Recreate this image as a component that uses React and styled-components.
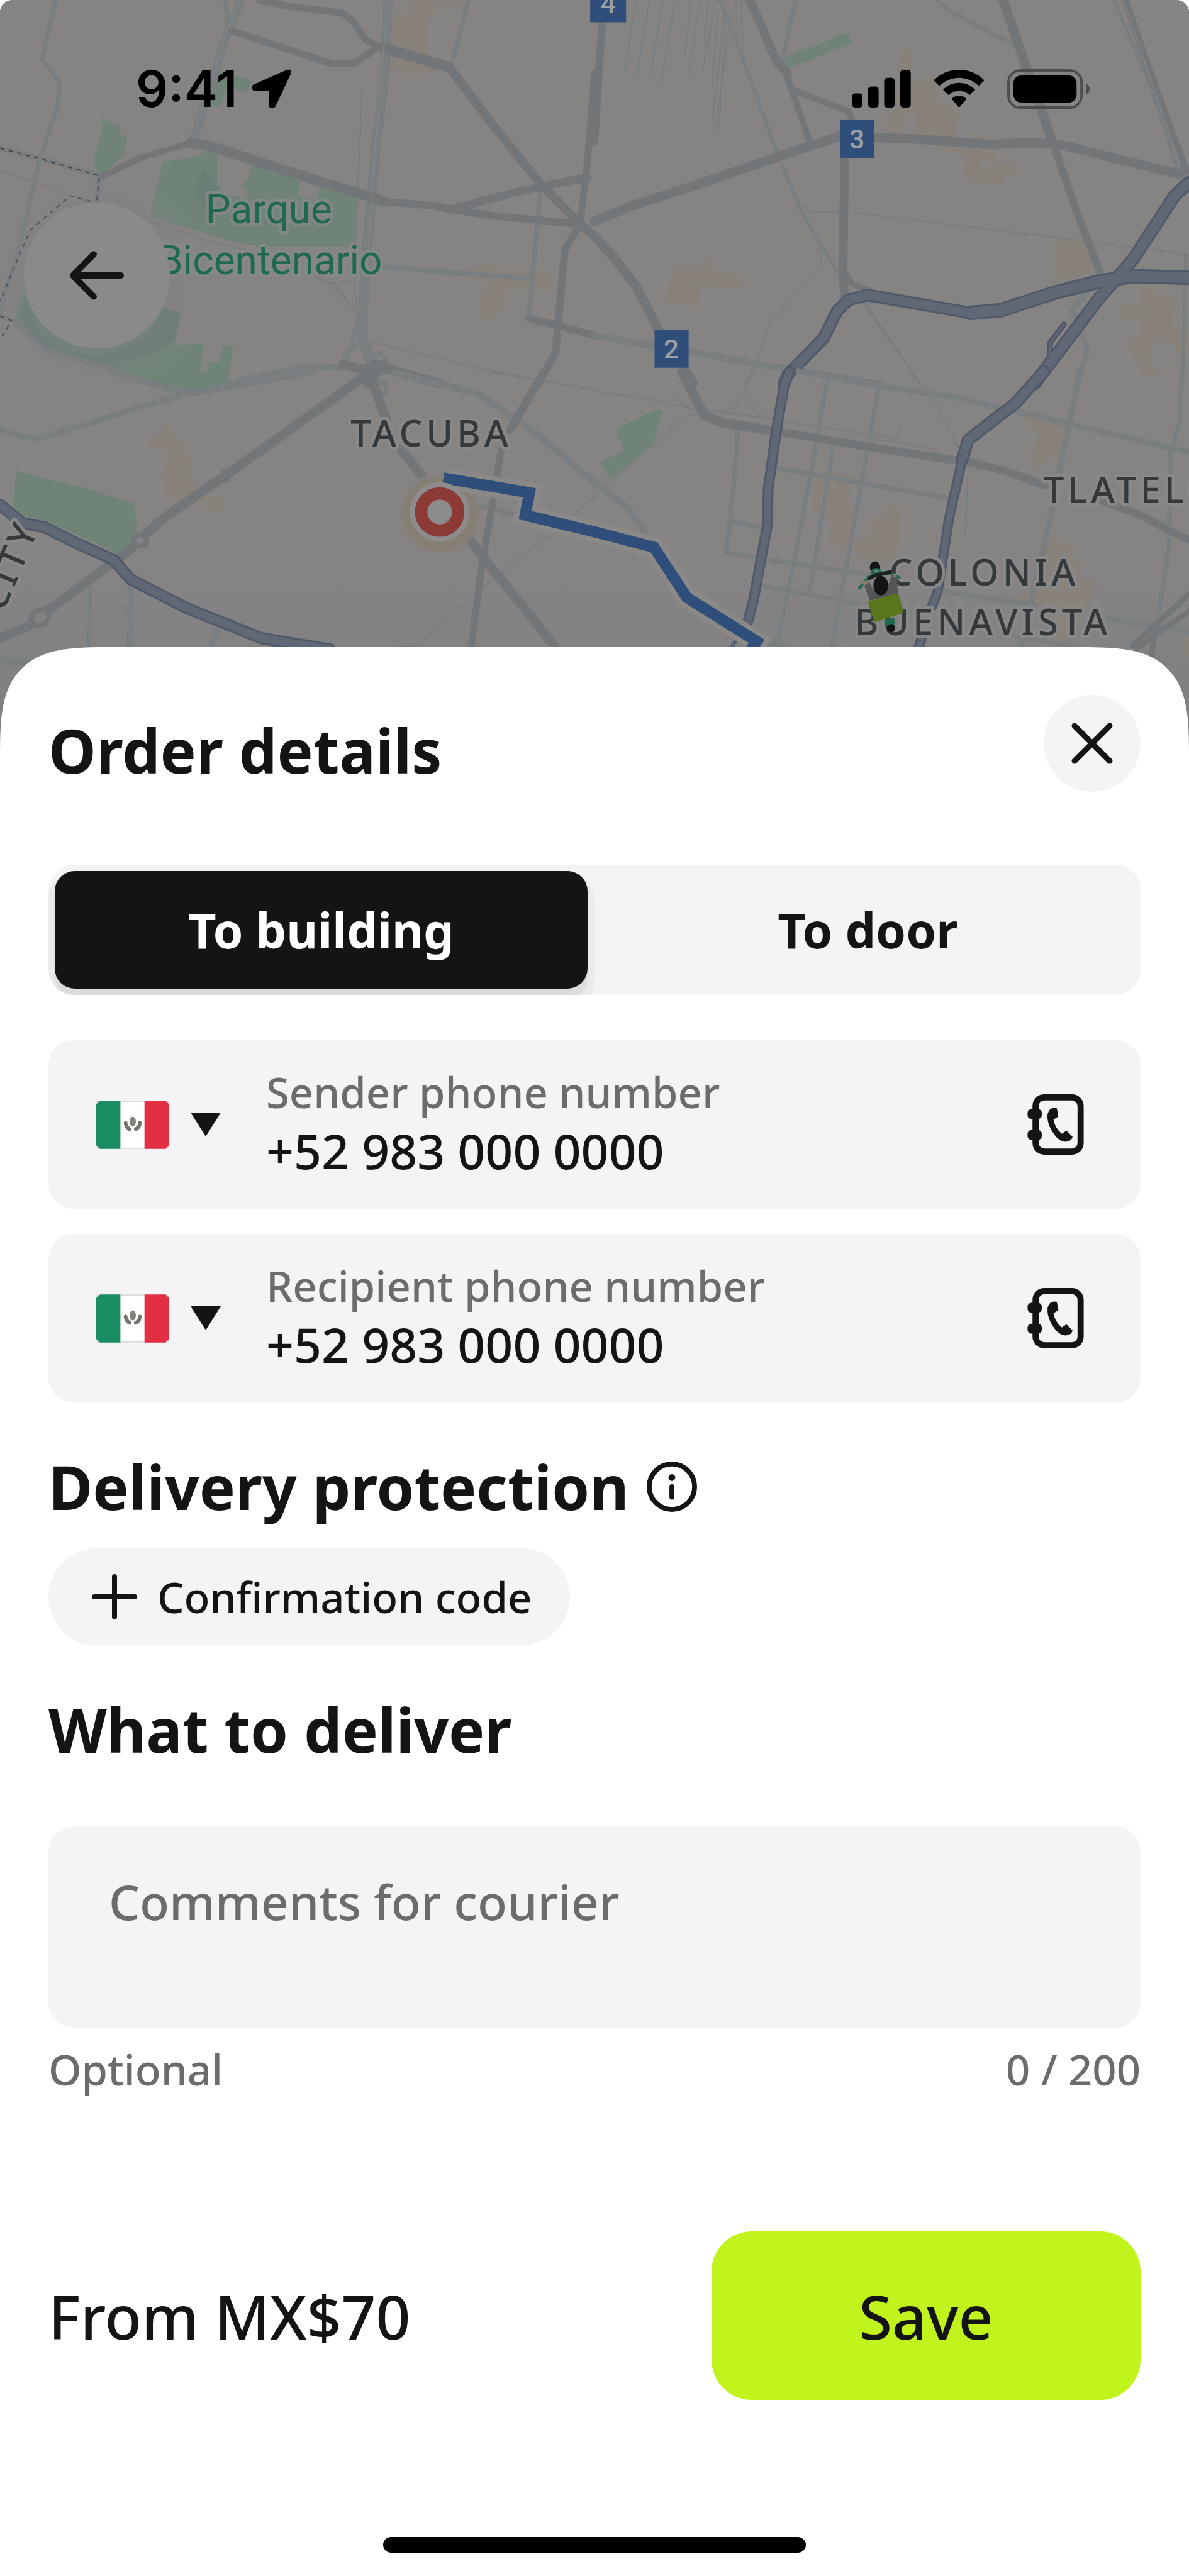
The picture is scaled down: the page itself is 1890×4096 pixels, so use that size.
import React, { useState } from "react";
import styled, { createGlobalStyle } from "styled-components";

const GlobalStyle = createGlobalStyle`
  * { box-sizing: border-box; }
  body { margin: 0; background: #fff; }
  button, input, textarea, select { font: inherit; color: inherit; }
  button { border: 0; padding: 0; background: none; cursor: pointer; }
`;

const ink = "#141414";
const muted = "#6b6c6e";
const surface = "#f4f4f7";

const Screen = styled.div`
  position: relative;
  overflow: hidden;
  border-radius: 20px 20px 0 0;
  background: #848383;
  color: ${ink};
  font-family: "Noto Sans", sans-serif;
`;

const MapCanvas = styled.svg`
  position: absolute;
  top: 0;
  left: 0;
  width: 100%;
  height: auto;
  display: block;
`;

const Line = styled.path`
  fill: none;
  stroke: ${(p) => p.$color};
  stroke-width: ${(p) => p.$w}px;
  stroke-linejoin: round;
  stroke-linecap: ${(p) => (p.$dash ? "butt" : "round")};
  stroke-dasharray: ${(p) => p.$dash || "none"};
  vector-effect: non-scaling-stroke;
`;

const MapLabel = styled.text`
  font-family: ${(p) => p.$font || '"Noto Sans", sans-serif'};
  font-size: ${(p) => p.$size || 59}px;
  font-weight: ${(p) => p.$weight || 500};
  letter-spacing: ${(p) => p.$tracking || 0}px;
  fill: ${(p) => p.$color || "#36393b"};
  stroke: ${(p) => p.$halo || "#898888"};
  stroke-width: 10px;
  stroke-linejoin: round;
  paint-order: stroke;
`;

const Shield = styled.text`
  font-family: Roboto, sans-serif;
  font-size: 43px;
  font-weight: 500;
  fill: #9c9fa3;
  text-anchor: middle;
`;

/* Each quadrant holds its streets in its own grid of 1568 by 1568 units. */
const quadrants = [
  {
    at: "matrix(.61224 0 0 .39541 0 0)",
    parks: [
      "M265 485 315 510 315 550 335 555 325 640 265 715 245 665 272 515Z",
      "M430 662 530 635 540 605 577 625 572 740 590 790 650 812 655 785 635 765 655 725 665 670 793 735 785 800 835 815 845 752 943 790 938 1010 700 1010 620 990 395 885Z",
      "M588 1410 615 1413 600 1568 545 1568 552 1480 578 1480Z",
      "M575 285 660 325 655 378 600 360 580 435 555 430Z",
      "M60 1190 Q 250 1600 430 1255 L477 1280 460 1410 537 1405 525 1568 430 1568 125 1430 40 1300Z",
    ],
    ponds: ["M540 685 580 780 550 850 530 840 518 790 520 740Z", "M70 1225 C100 1520 380 1520 430 1255 L477 1280 460 1390 C400 1480 250 1500 200 1460 L125 1420 50 1300Z"],
    blocks: [
      "M1072 0H1225L1205 30 1150 15 1145 60 1125 80 1130 120 1125 230 1160 240 1180 280 1130 295 1115 310 1065 310 1055 280 1022 280 1035 50 1090 60 1090 10Z",
      "M1180 1110 1300 1080 1310 1105 1450 1105 1450 1190 1340 1180 1325 1260 1290 1325 1262 1290 1265 1200 1290 1150 1180 1130Z",
    ],
    minor: [
      [7, "M148 0 110 240 158 340 152 430 105 650 50 1010 0 1270"],
      [9, "M0 605 110 650 262 718 255 825"],
      [7, "M1235 0 1190 280"],
      [8, "M595 0 602 110"],
      [8, "M1425 780 1395 1300"],
      [9, "M1015 1090 1285 1125 1400 1138"],
      [8, "M0 1290 35 1310 125 1435 430 1568"],
      [10, "M600 1568 780 1505 900 1500 985 1500"],
      [16, "M1023 0 1015 300 990 620 970 980 958 1250 957 1380 985 1490"],
      [14, "M637 0 600 130 507 590"],
      [9, "M958 1250 930 1400 895 1510"],
      [5, "M935 1430 Q945 1380 960 1450 T1000 1440 Q1030 1460 1010 1530"],
    ],
    major: [
      [11, "M685 0 770 28 900 52 930 85 965 165 1010 195"],
      [17, "M1010 195 1185 275"],
      [14, "M1185 275 1305 520 1425 750 1530 915 1568 965"],
      [11, "M610 125 870 258 935 258 1000 190"],
      [10, "M270 720 370 645 500 585"],
      [16, "M500 585 545 592 700 670 850 745 1020 825"],
      [12, "M1020 825 1140 840 1190 855 1290 880 1520 915"],
      [13, "M1195 853 1350 790 1450 755 1550 725"],
      [11, "M1530 915 1550 650 1568 300"],
      [12, "M1530 915 1490 1020 1465 1440 1420 1568"],
      [12, "M1395 1300 1568 1370"],
      [15, "M985 1490 1160 1568"],
      [15, "M905 1490 960 1510 1010 1490 970 1568"],
    ],
    inner: [[2, "M633 0 596 140 510 560"], [2, "M1020 60 988 620 963 1240"]],
    rails: [
      "M0 695 180 795 240 825",
      "M390 900 560 990 700 1040 870 1160 940 1270",
      "M870 1160 920 1145",
      "M955 360 940 900 935 1150 940 1260",
      "M960 1390 1120 1450 1280 1510 1450 1560",
      "M890 1170 945 1290",
    ],
    borders: ["M0 605 110 650 262 718 255 825", "M240 822 185 800 80 940 60 1010 0 1230", "M0 1290 30 1310 0 1390"],
    highways: [],
  },
  {
    at: "matrix(.61224 0 0 .39541 960 0)",
    parks: ["M500 232 668 134 678 180 508 280Z"],
    ponds: [],
    blocks: [
      "M805 205 840 210 835 335 870 340 870 305 905 310 900 420 965 440 950 560 845 545 850 460 815 455 808 545 770 540 785 440 800 435Z",
      "M990 540 1025 550 1020 575 990 570Z",
      "M910 600 1055 610 1055 655 1120 675 1110 720 1085 715 1080 755 972 735 980 635 912 620ZM1018 652 1055 660 1050 690 1015 690Z",
      "M1212 975 1295 990 1315 1110 1212 1160Z",
      "M203 1087 275 1095 290 1052 312 1060 308 1105 380 1122 390 1182 340 1182 280 1165 272 1258 190 1235Z",
      "M1440 1170 1478 1165 1478 1205 1528 1210 1525 1340 1568 1345 1568 1440 1530 1440 1530 1400 1470 1395 1465 1470 1487 1530 1455 1550 1400 1400 1440 1370 1440 1300 1390 1315 1388 1245 1440 1248Z",
    ],
    minor: [
      [7, "M530 0 495 250"],
      [6, "M330 0 375 170 480 620 550 880 640 1110"],
      [7, "M905 0 930 40 1115 190"],
      [6, "M1370 0 1460 330 1545 720"],
      [6, "M1560 1040 1550 1568"],
      [9, "M1310 1170 1260 1270 1300 1430 1275 1568"],
      [11, "M0 1370 160 1415M250 1435 420 1485 750 1568"],
      [6, "M613 1540V1568"],
    ],
    major: [
      [12, "M20 90 0 580"],
      [14, "M410 0 480 250 510 300"],
      [10, "M505 300 570 590"],
      [10, "M525 370 670 455 682 500"],
      [15, "M0 905 100 840 280 750 410 680 570 595 650 555M738 562 850 568 1040 590 1160 582 1240 595 1420 665 1545 712"],
      [14, "M660 645 655 1120 660 1215"],
      [9, "M660 1110 680 1160 730 1190"],
      [15, "M1078 0 1120 190 1210 590"],
      [12, "M1210 590 1280 900 1335 1120"],
      [12, "M1400 0 1470 320 1560 700"],
      [15, "M0 965 50 1050 110 1170 170 1350M232 1490 260 1568"],
    ],
    inner: [[2, "M1395 0 1550 700"]],
    rails: [
      "M110 0 80 290", "M145 0 112 310", "M180 0 148 310", "M212 0 175 355", "M255 0 238 220",
      "M278 0 248 310", "M320 0 285 290", "M345 30 312 490", "M360 60 320 525", "M385 0 395 260",
      "M345 120 328 530", "M300 0 290 180", "M372 0 380 200", "M325 60 310 360",
      "M550 835 562 864 690 870 1310 988 1560 1038",
      "M550 880 590 990 600 1090 470 1300 405 1568",
      "M690 1200 860 1568", "M680 1160 830 1500",
    ],
    borders: [],
    highways: [
      [9, "M1238 1325 1202 1400 1200 1450"],
      [21, "M1568 745 1530 800 1420 1060 1330 1220 1160 1568"],
      [23, "M1568 1135 1420 1128 1330 1150 1215 1195 1070 1268 990 1278"],
      [20, "M990 1278 720 1205 670 1225 640 1270 605 1380 510 1530 500 1568"],
    ],
  },
  {
    at: "matrix(.61224 0 0 .39541 0 600)",
    parks: ["M42 405 120 440 215 472 353 540 365 680 315 745 120 610 60 590 35 550Z", "M330 0H605L600 50 510 80 420 60Z"],
    ponds: [],
    blocks: ["M428 225 460 230 458 275 485 280 480 340 508 345 498 430 518 435 515 505 594 518 585 575 480 530 433 515 438 435 427 430 445 320 392 310 398 265 428 262Z"],
    minor: [
      [10, "M0 235 60 268 110 272 330 165 490 90"],
      [10, "M290 0 420 60 510 88 600 65 830 0"],
      [11, "M1040 5 1260 90 1420 260 1568 455"],
      [8, "M1240 540 1350 580"],
      [7, "M238 870 233 1126"],
      [9, "M345 890 341 1126"],
      [3, "M300 940 330 965 338 1000"],
      [9, "M578 1040 555 1126"],
      [13, "M0 1183 85 1192"],
      [8, "M985 50Q1030 30 1015 90L995 90"],
    ],
    major: [
      [15, "M970 10 600 420 440 590 385 662M350 720 220 870 130 972M78 1040 0 1090"],
      [15, "M980 30 1020 200M1055 315 1125 450M1225 660 1300 810 1400 1000 1465 1126"],
      [13, "M1435 0 1345 240"],
      [11, "M1322 320 1310 430M1300 530 1270 800 1243 1126"],
      [8, "M370 667C393 667 393 713 370 713 347 713 347 667 370 667Z"],
      [8, "M92 980 118 970 130 1000 120 1030 95 1040 80 1010Z"],
      [10, "M590 410 600 440"],
    ],
    inner: [],
    rails: ["M1280 0 1568 75", "M1568 510 1510 590M1450 670 1280 870 1180 1010 1100 1120 1050 1122"],
    borders: [],
    highways: [[19, "M0 545 60 620 115 635 200 700 300 770 345 850 490 965 690 1090 870 1135"]],
  },
  {
    at: "matrix(.61224 0 0 .39541 960 600)",
    parks: ["M155 158H180L155 295 42 440 15 375 78 320 55 235Z"],
    ponds: [],
    blocks: [
      "M1440 0H1485L1480 20 1450 28Z",
      "M1125 160 1245 205 1220 365 1190 350 1175 405 1155 395 1170 250 1125 200Z",
      "M600 400 678 425 670 550 688 555 675 680 730 680 725 590 762 590 770 550 808 550 800 760 760 790 700 760 680 720 617 710 622 590 575 575 585 440Z",
      "M1170 685 1265 705 1260 770 1285 775 1280 845 1315 850 1305 950 1240 1100 1200 1090 1210 960 1100 930 1165 900 1180 790Z",
      "M1568 1060 1545 1160H1568Z",
    ],
    minor: [
      [10, "M540 0 760 60 970 110 1070 150M1115 165 1240 210 1568 330"],
      [7, "M615 25 585 290 525 790 480 1126"],
      [7, "M750 60 720 320 660 830 625 1126"],
      [7, "M630 300 568 900"],
      [8, "M378 220 370 420 348 740 440 765 720 830"],
      [8, "M360 612 435 635"],
      [8, "M480 395 940 520M445 875 690 950"],
      [10, "M1280 0 1250 230 1225 410M1208 560 1150 950"],
      [8, "M1548 0 1545 200 1520 330 1515 720 1480 1070"],
      [9, "M925 900 1160 955M1350 1010 1568 1060"],
      [7, "M1100 1080 1280 1126M1130 1090 1128 1126M460 1110 500 1120"],
      [11, "M0 450 90 560 135 665"],
    ],
    major: [
      [15, "M230 0 290 180 340 210 480 245"],
      [13, "M480 245 730 310 960 365M985 370 1080 405 1190 465"],
      [12, "M1340 530 1430 580 1568 690"],
      [9, "M1568 910 1420 1120M1568 980 1430 1130M1480 1030 1470 1160"],
    ],
    inner: [],
    rails: [
      "M0 80 150 115 290 160 350 165 500 205 800 275 808 230",
      "M830 0 900 130 960 310", "M740 275 905 320", "M415 0 375 145 340 160",
      "M270 175 245 180 0 510", "M985 430 978 665", "M400 60 420 160 470 200", "M210 100 240 140",
    ],
    borders: [],
    highways: [
      [17, "M515 0 500 60 480 240 458 480 455 640 440 760 420 930 405 1020"],
      [6, "M370 1105 362 1126"],
      [20, "M1185 0 1110 130 985 280 970 360"],
      [16, "M970 360 935 600 915 800 905 900 890 960M862 1095 855 1126"],
    ],
  },
];

function Quadrant({ q }) {
  const lines = (list, color) => list.map(([w, d]) => <Line key={d} d={d} $w={w} $color={color} />);
  return (
    <g transform={q.at}>
      {q.parks.map((d) => <path key={d} d={d} fill="#6f8477" />)}
      {q.ponds.map((d) => <path key={d} d={d} fill="#697e75" />)}
      {q.blocks.map((d) => <path key={d} d={d} fill="#88827a" fillRule="evenodd" />)}
      {q.rails.map((d) => <Line key={d} d={d} $w={2} $color="#787d7f" />)}
      {q.rails.map((d) => <Line key={d + "t"} d={d} $w={7} $color="#7a7f80" $dash="2 34" />)}
      {lines(q.minor, "#797e81")}
      {lines(q.major, "#727679")}
      {lines(q.inner, "#828485")}
      {q.borders.map((d) => <Line key={d} d={d} $w={2} $color="#3f4349" $dash="7 7" />)}
      {lines(q.highways, "#4f596a")}
      {lines(q.highways.map(([w, d]) => [Math.max(w - 6, 3), d]), "#606875")}
    </g>
  );
}

function CityMap() {
  const route = "M716 772 855 796 848 832 960 859 1056 884 1109 965 1222 1036 1212 1050";
  return (
    <MapCanvas viewBox="0 0 1920 1240" aria-hidden="true">
      <defs>
        <linearGradient id="fade" x1="0" y1="0" x2="0" y2="1">
          <stop offset="0" stopColor="#868383" />
          <stop offset=".72" stopColor="#868383" />
          <stop offset=".85" stopColor="#828282" />
          <stop offset="1" stopColor="#7e7e7e" />
        </linearGradient>
        <radialGradient id="shade">
          <stop offset=".6" stopColor="#7c7f80" stopOpacity=".7" />
          <stop offset="1" stopColor="#848383" stopOpacity="0" />
        </radialGradient>
        <radialGradient id="glow">
          <stop offset=".85" stopColor="#877f73" />
          <stop offset="1" stopColor="#858381" stopOpacity="0" />
        </radialGradient>
      </defs>
      <rect width="1920" height="1240" fill="url(#fade)" />
      {quadrants.map((q) => <Quadrant key={q.at} q={q} />)}
      <circle cx="156" cy="456" r="186" fill="url(#shade)" opacity=".6" />

      <MapLabel x="434" y="361" textAnchor="middle" $font="Roboto, sans-serif" $size={65} $weight={400} $color="#1f6a4d" $halo="#828785">Parque</MapLabel>
      <MapLabel x="436" y="443" textAnchor="middle" $font="Roboto, sans-serif" $size={65} $weight={400} $color="#1f6a4d" $halo="#868887">Bicentenario</MapLabel>
      <MapLabel x="566" y="721" $tracking={6}>TACUBA</MapLabel>
      <MapLabel x="1685" y="813" $tracking={6}>TLATELOLCO</MapLabel>
      <MapLabel x="1436" y="946" $tracking={6}>COLONIA</MapLabel>
      <MapLabel x="1380" y="1026" $tracking={6}>BUENAVISTA</MapLabel>
      <MapLabel transform="translate(64 852) rotate(-67)" textAnchor="end" $tracking={6}>CITY</MapLabel>

      <rect x="953" y="-24" width="58" height="60" fill="#2f4f7a" />
      <Shield x="982" y="20">4</Shield>
      <rect x="1357" y="194" width="55" height="61" fill="#2f4f7a" />
      <Shield x="1384" y="240">3</Shield>
      <rect x="1057" y="533" width="55" height="61" fill="#2f4f7a" />
      <Shield x="1084" y="579">2</Shield>

      <circle cx="710" cy="830" r="68" fill="url(#glow)" />
      <path d={route} fill="none" stroke="#8a8988" strokeWidth="34" />
      <path d={route} fill="none" stroke="#2f4f7a" strokeWidth="18" />
      <circle cx="710" cy="827" r="48" fill="#8d8c8c" />
      <circle cx="710" cy="827" r="30" fill="none" stroke="#8b3a36" strokeWidth="20" />

      <g transform="translate(1380 880) scale(.33333)">
        <ellipse cx="99" cy="110" rx="25" ry="30" fill="#141414" />
        <path d="M78 140Q80 112 105 112T132 138Z" fill="#1f6a4d" />
        <rect x="93" y="122" width="24" height="10" rx="5" fill="#6d8579" />
        <path d="M24 210 38 192M42 182 66 160 90 148 150 134 180 140 216 160" fill="none" stroke="#1f6a4d" strokeWidth="14" strokeLinecap="round" />
        <path d="M72 162 100 148 158 136 172 132" fill="none" stroke="#1c211f" strokeWidth="18" strokeLinecap="round" />
        <path d="M44 190 70 180 92 222 160 205 178 150 205 158 210 240 74 270Z" fill="#545557" />
        <path d="M34 180Q46 164 56 180L64 186 46 198ZM182 138 200 142 204 156 186 158Z" fill="#8c7a6c" />
        <ellipse cx="127" cy="198" rx="36" ry="47" fill="#141414" />
        <path d="M142 366 192 352 194 384Q170 398 148 388Z" fill="#1f6a4d" />
        <ellipse cx="177" cy="404" rx="20" ry="20" fill="#141414" />
        <path d="M64 276 212 235 238 330 96 376Z" fill="#59761c" />
      </g>
    </MapCanvas>
  );
}

const StatusBar = styled.header`
  position: relative;
  display: flex;
  justify-content: space-between;
  align-items: center;
  height: 282px;
  padding: 0 158px 0 216px;
  color: #000;
`;

const StatusGroup = styled.div`
  display: flex;
  align-items: center;
  gap: ${(p) => p.$gap}px;
`;

const Clock = styled.span`
  font-family: Inter, sans-serif;
  font-size: 80px;
  font-weight: 600;
  line-height: 100px;
`;

const BackButton = styled.button`
  position: relative;
  display: grid;
  place-items: center;
  width: 232px;
  height: 232px;
  margin: 40px 38px 0;
  border-radius: 50%;
  background: #8a8a8a;
`;

const Sheet = styled.main`
  position: relative;
  display: flex;
  flex-direction: column;
  margin-top: 475px;
  padding: 76px 77px 37px;
  background: #fff;
  border-radius: 124px 124px 0 0;
  @supports (corner-shape: squircle) {
    border-radius: 176px 176px 0 0;
    corner-shape: superellipse(1.68);
  }
`;

const SheetHeader = styled.div`
  display: flex;
  justify-content: space-between;
  align-items: flex-end;
`;

const Heading = styled.h2`
  margin: 0;
  font-size: 96px;
  font-weight: 700;
  line-height: ${(p) => (p.$tall ? 132 : 124)}px;
`;

const CloseButton = styled.button`
  display: grid;
  place-items: center;
  width: 154px;
  height: 154px;
  border-radius: 50%;
  background: ${surface};
`;

const Segments = styled.div`
  display: grid;
  grid-template-columns: 1fr 1fr;
  gap: 22px;
  height: 207px;
  margin-top: 116px;
  padding: 10px;
  border-radius: 40px;
  background: ${surface};
  overflow: hidden;
`;

const Segment = styled.button`
  border-radius: 32px;
  font-size: 77px;
  font-weight: 700;
  ${(p) =>
    p.$active &&
    `
    background: ${ink};
    color: #fff;
    box-shadow: 0 16px 4px rgba(0, 0, 0, 0.06), 0 16px 2px 12px rgba(0, 0, 0, 0.04);
  `}
`;

const Fields = styled.div`
  display: grid;
  gap: 40px;
  margin-top: 72px;
`;

const Field = styled.div`
  display: flex;
  align-items: center;
  height: 268px;
  padding: 0 90px 0 76px;
  border-radius: 40px;
  background: ${surface};
`;

const Country = styled.div`
  position: relative;
  display: flex;
  align-items: center;
  gap: 34px;
  margin-right: 72px;
`;

const CountrySelect = styled.select`
  position: absolute;
  inset: 0;
  width: 100%;
  opacity: 0;
  cursor: pointer;
`;

const FieldText = styled.div`
  flex: 1;
  min-width: 0;
  display: flex;
  flex-direction: column;
  padding-bottom: 4px;
`;

const FieldLabel = styled.label`
  color: ${muted};
  font-size: 67px;
  font-weight: 500;
  line-height: 88px;
`;

const PhoneInput = styled.input`
  width: 100%;
  height: 100px;
  padding: 0;
  border: 0;
  outline: 0;
  background: none;
  font-size: 77px;
  font-weight: 500;
  line-height: 100px;
`;

const SectionHead = styled.div`
  display: flex;
  align-items: center;
  gap: 28px;
  margin-top: 72px;
`;

const IconButton = styled.button`
  display: grid;
  place-items: center;
`;

const Chip = styled.button`
  align-self: flex-start;
  display: flex;
  align-items: center;
  gap: 32px;
  height: 154px;
  margin-top: 36px;
  padding: 0 60px 0 69px;
  border-radius: 77px;
  background: ${surface};
  font-size: 67px;
  font-weight: 500;
`;

const Comment = styled.textarea`
  display: block;
  width: 100%;
  height: 320px;
  margin-top: 92px;
  padding: 70px 96px;
  border: 0;
  outline: 0;
  resize: none;
  border-radius: 40px;
  background: ${surface};
  font-size: 77px;
  font-weight: 500;
  line-height: 100px;
  &::placeholder { color: ${muted}; opacity: 1; }
`;

const Hints = styled.div`
  display: flex;
  justify-content: space-between;
  margin-top: 22px;
  color: ${muted};
  font-size: 67px;
  font-weight: 500;
  line-height: 88px;
`;

const Footer = styled.div`
  display: flex;
  justify-content: space-between;
  align-items: center;
  margin-top: 214px;
`;

const Price = styled.span`
  font-size: 96px;
  font-weight: 500;
`;

const SaveButton = styled.button`
  width: 682px;
  height: 268px;
  border-radius: 64px;
  background: #c1f31d;
  font-size: 96px;
  font-weight: 500;
`;

const HomeIndicator = styled.div`
  align-self: center;
  width: 672px;
  height: 25px;
  margin-top: 218px;
  border-radius: 13px;
  background: #000;
`;

function Flag() {
  return (
    <svg width="116" height="77" viewBox="0 0 118 78" aria-hidden="true">
      <rect width="118" height="78" rx="3" fill="#dcdcdc" />
      <rect x="39" y="2" width="40" height="74" fill="#fff" />
      <path d="M6 0H39V78H6L0 72V6Z" fill="#1b8d63" />
      <path d="M78 0H112L118 6V72L112 78H78Z" fill="#e22f44" />
      <ellipse cx="59" cy="34" rx="5" ry="8" fill="#84807a" />
      <path d="M47.500 36Q48 43 54 46M70.500 36Q70 43 64 46" fill="none" stroke="#7a736b" strokeWidth="6" strokeLinecap="round" />
    </svg>
  );
}

function ContactsIcon() {
  return (
    <svg width="90" height="96" viewBox="0 0 91 98" aria-hidden="true">
      <rect x="13" y="5" width="73" height="88" rx="14" fill="none" stroke={ink} strokeWidth="10" />
      <rect x="0" y="24" width="23" height="16" rx="6" fill={ink} />
      <rect x="0" y="58" width="23" height="16" rx="6" fill={ink} />
      <path d="M40 22.500Q46 21 47.500 23L50 36 42 41Q44 54 55.500 64L63 59 73 69Q71 77 61.500 77Q49 77 38 57Q31 44 32.500 32Q35 24 40 22.500Z" fill={ink} />
    </svg>
  );
}

function PhoneField({ id, label }) {
  const [value, setValue] = useState("+52 983 000 0000");
  return (
    <Field>
      <Country>
        <Flag />
        <svg width="48" height="38" viewBox="0 0 48 38" aria-hidden="true">
          <path d="M0 0H48L24 38Z" fill={ink} />
        </svg>
        <CountrySelect aria-label="Country code" defaultValue="MX">
          <option value="MX">+52</option>
        </CountrySelect>
      </Country>
      <FieldText>
        <FieldLabel htmlFor={id}>{label}</FieldLabel>
        <PhoneInput id={id} type="tel" value={value} onChange={(e) => setValue(e.target.value)} />
      </FieldText>
      <IconButton type="button" aria-label="Choose from contacts">
        <ContactsIcon />
      </IconButton>
    </Field>
  );
}

export default function App() {
  const [target, setTarget] = useState("To building");
  const [comment, setComment] = useState("");
  return (
    <Screen>
      <GlobalStyle />
      <CityMap />
      <StatusBar>
        <StatusGroup $gap={22}>
          <Clock>9:41</Clock>
          <svg width="64" height="63" viewBox="0 0 64 63" aria-hidden="true">
            <path d="M57 1Q65-1 63 8L39 59Q35 65 29 60V37Q29 34 26 34H4Q-2 30 3 25Z" fill="#000" />
          </svg>
        </StatusGroup>
        <StatusGroup $gap={36}>
          <svg width="94" height="60" viewBox="0 0 95 61" aria-hidden="true">
            <rect x="0" y="38" width="17" height="23" rx="5" />
            <rect x="26" y="27" width="17" height="34" rx="5" />
            <rect x="52" y="13" width="17" height="48" rx="5" />
            <rect x="78" y="0" width="17" height="61" rx="5" />
          </svg>
          <svg width="81" height="60" viewBox="0 0 82 61" aria-hidden="true">
            <path d="M41 0C57 0 71 6 82 17L73 26C64 18 53 13 41 13S18 18 9 26L0 17C11 6 25 0 41 0Z" />
            <path d="M41 21C51 21 60 25 67 32L58 41C53 36 47 34 41 34S29 36 24 41L15 32C22 25 31 21 41 21Z" />
            <path d="M41 42C46 42 50 44 53 47L41 61 29 47C32 44 36 42 41 42Z" />
          </svg>
          <svg width="131" height="63" viewBox="0 0 133 64" aria-hidden="true">
            <rect x="2" y="2" width="118" height="60" rx="19" fill="none" stroke="#4d4d4d" strokeWidth="4" />
            <rect x="10" y="10" width="102" height="44" rx="13" />
            <path d="M127 23Q133 26 133 32T127 41Z" fill="#4d4d4d" />
          </svg>
        </StatusGroup>
      </StatusBar>
      <BackButton type="button" aria-label="Back">
        <svg width="86" height="78" viewBox="0 0 88 79" aria-hidden="true">
          <path d="M39 5 5 39.500 39 74M6 39.500H83" fill="none" stroke={ink} strokeWidth="10" strokeLinecap="round" strokeLinejoin="round" />
        </svg>
      </BackButton>

      <Sheet>
        <SheetHeader>
          <Heading $tall>Order details</Heading>
          <CloseButton type="button" aria-label="Close">
            <svg width="66" height="66" viewBox="0 0 66 66" aria-hidden="true">
              <path d="M5 5 61 61M61 5 5 61" stroke={ink} strokeWidth="9" strokeLinecap="round" />
            </svg>
          </CloseButton>
        </SheetHeader>

        <Segments>
          {["To building", "To door"].map((name) => (
            <Segment key={name} type="button" aria-pressed={target === name} $active={target === name} onClick={() => setTarget(name)}>
              {name}
            </Segment>
          ))}
        </Segments>

        <Fields>
          <PhoneField id="sender" label="Sender phone number" />
          <PhoneField id="recipient" label="Recipient phone number" />
        </Fields>

        <SectionHead>
          <Heading>Delivery protection</Heading>
          <IconButton type="button" aria-label="About delivery protection">
            <svg width="80" height="80" viewBox="0 0 82 82" aria-hidden="true">
              <circle cx="41" cy="41" r="37" fill="none" stroke={ink} strokeWidth="8" />
              <circle cx="41" cy="26" r="5.500" fill={ink} />
              <path d="M41 41V58" stroke={ink} strokeWidth="8" strokeLinecap="round" />
            </svg>
          </IconButton>
        </SectionHead>
        <Chip type="button">
          <svg width="72" height="72" viewBox="0 0 72 72" aria-hidden="true">
            <path d="M36 4V68M4 36H68" stroke={ink} strokeWidth="8" strokeLinecap="round" />
          </svg>
          Confirmation code
        </Chip>

        <SectionHead>
          <Heading>What to deliver</Heading>
        </SectionHead>
        <Comment aria-label="Comments for courier" placeholder="Comments for courier" maxLength={200} value={comment} onChange={(e) => setComment(e.target.value)} />
        <Hints>
          <span>Optional</span>
          <span>{comment.length} / 200</span>
        </Hints>

        <Footer>
          <Price>From MX$70</Price>
          <SaveButton type="button">Save</SaveButton>
        </Footer>
        <HomeIndicator />
      </Sheet>
    </Screen>
  );
}
